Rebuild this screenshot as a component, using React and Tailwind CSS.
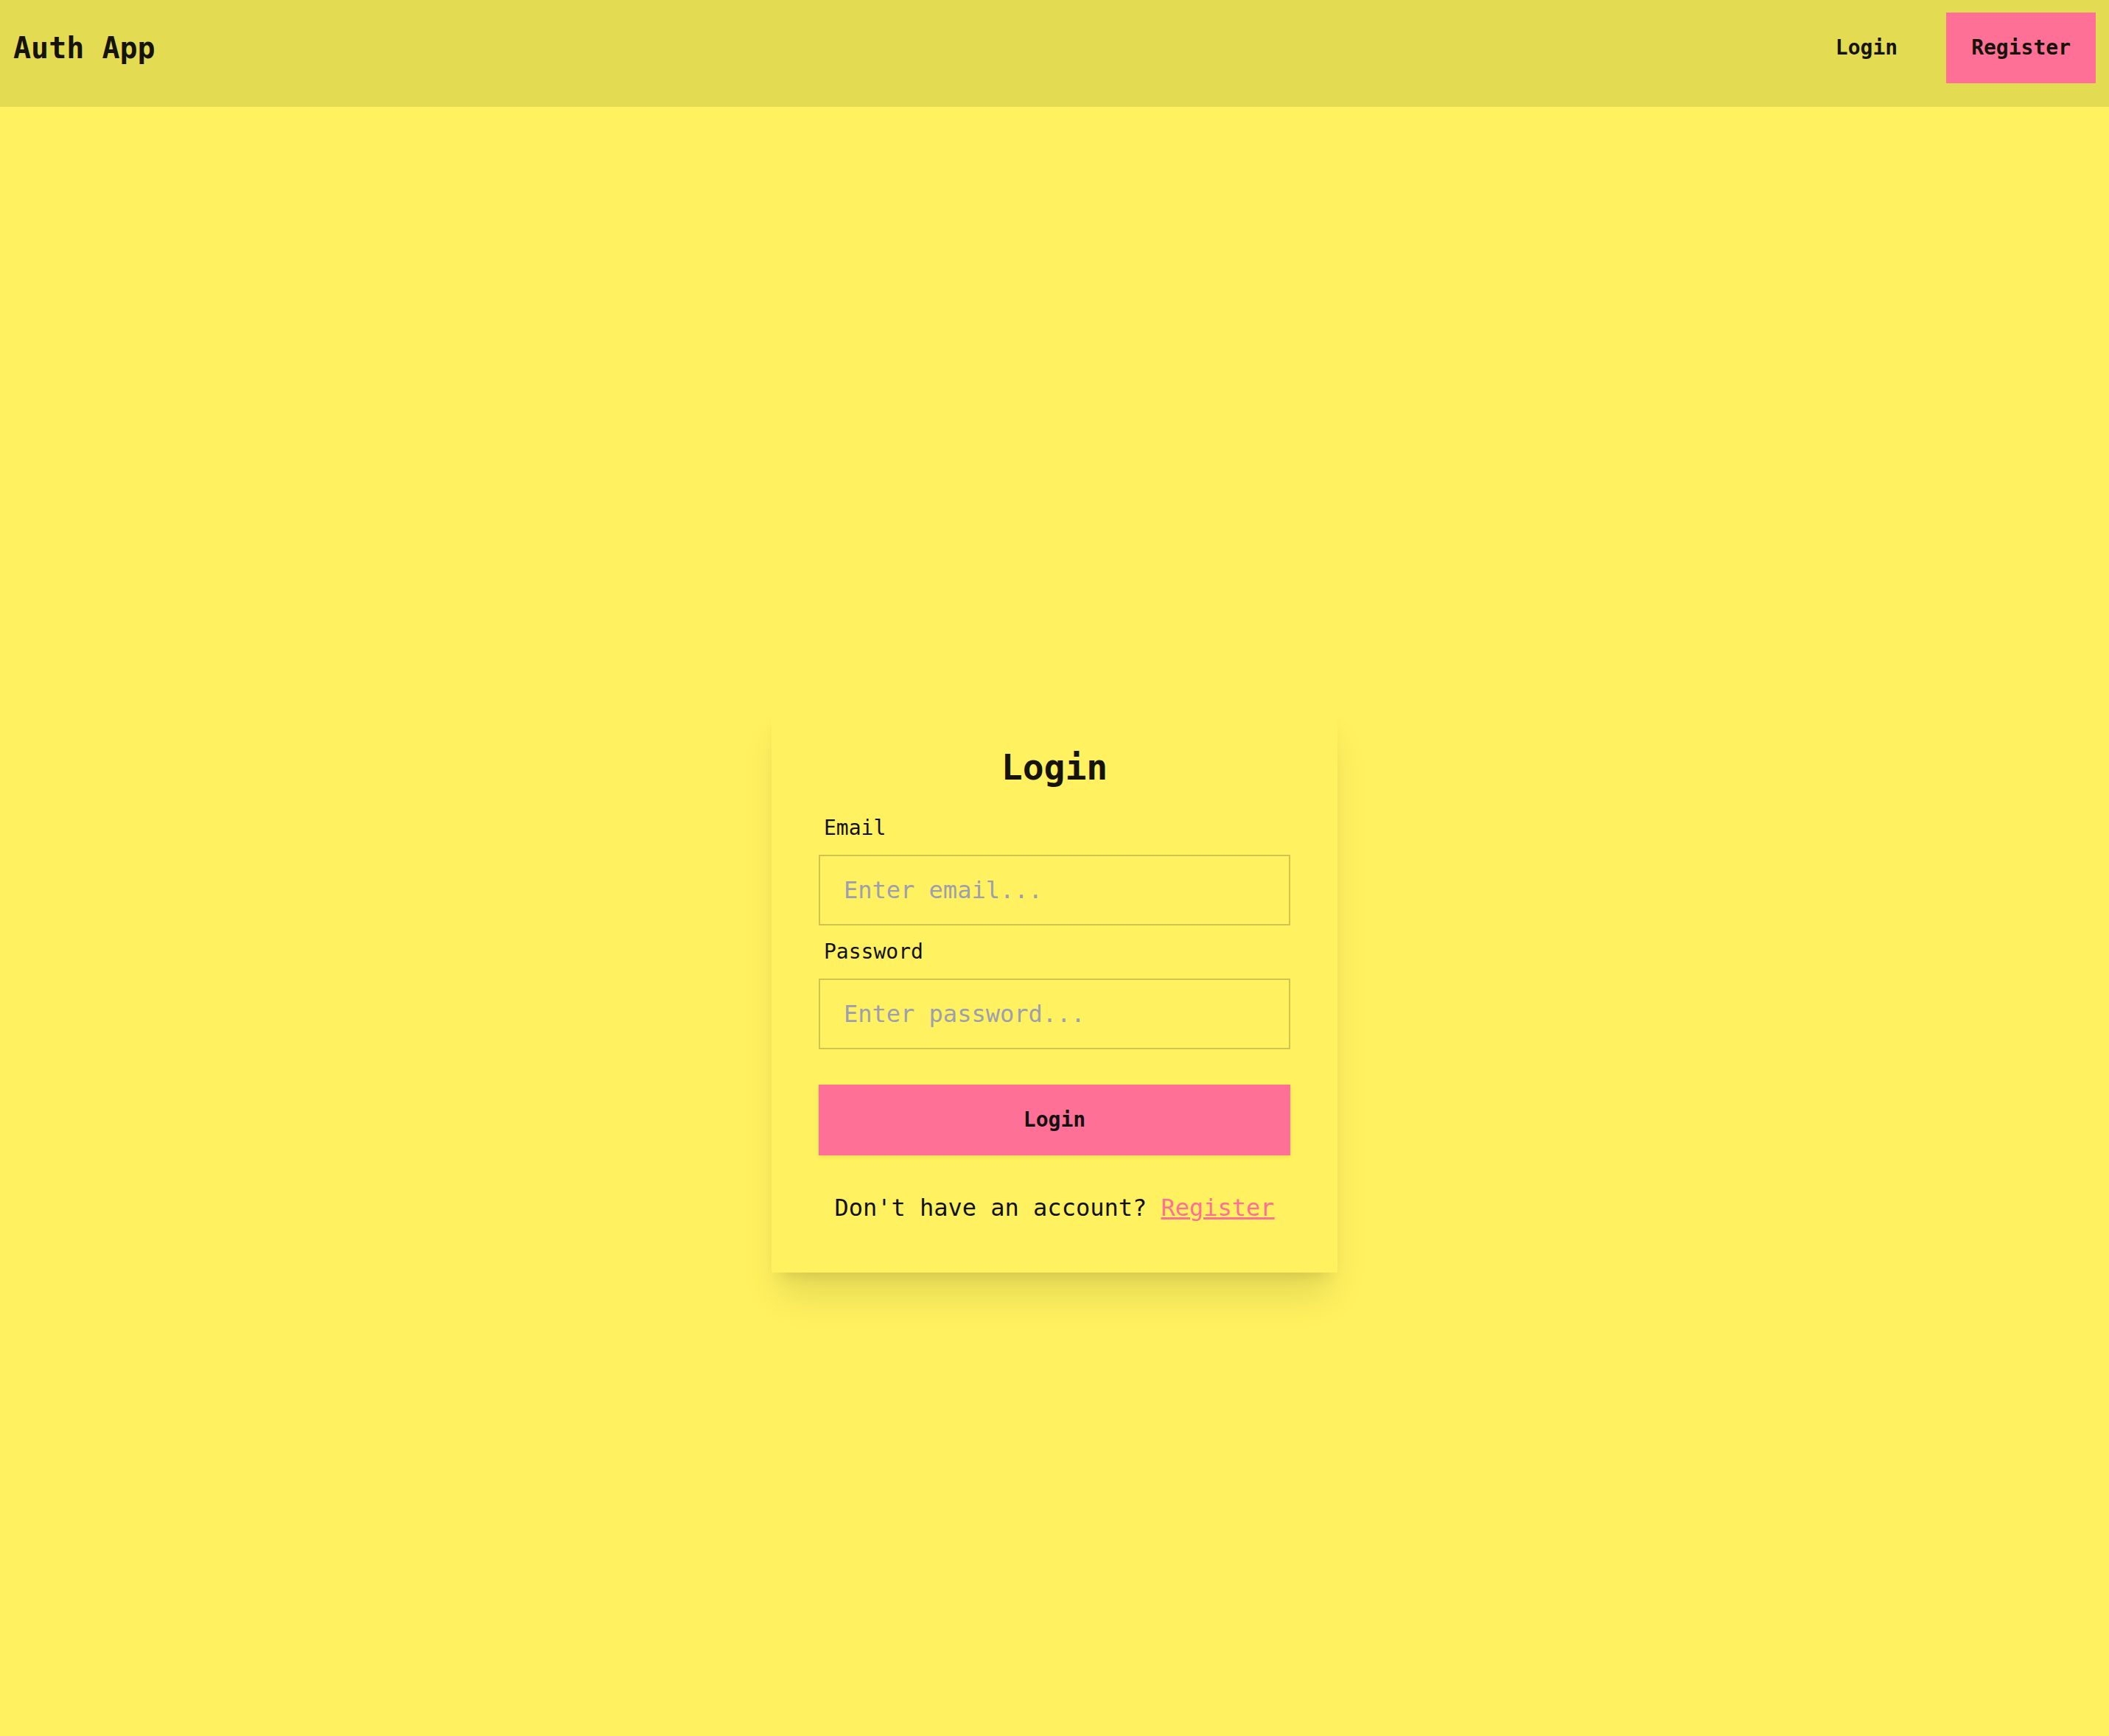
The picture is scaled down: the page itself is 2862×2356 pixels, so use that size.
import React from "react";

export default function App() {
  return (
    <div className="min-h-screen bg-[#fff15f] text-[#16140a] font-['DejaVu_Sans_Mono',monospace]">
      <header className="flex items-center justify-between bg-[#e3db52] pl-[18px] pr-[18px] pt-[17px] pb-[32px]">
        <div className="text-[40px] leading-[56px] font-bold">Auth App</div>
        <nav className="flex items-center gap-[32px]">
          <a href="#" className="h-[96px] flex items-center px-[34px] text-[28px] font-bold">
            Login
          </a>
          <a href="#" className="h-[96px] flex items-center px-[34px] text-[28px] font-bold bg-[#ff7096]">
            Register
          </a>
        </nav>
      </header>

      <main className="min-h-screen flex items-center justify-center pt-[34px]">
        <div className="w-[768px] p-[64px] bg-[#fff15f] shadow-[0_40px_50px_-10px_rgba(0,0,0,0.1),0_16px_20px_-12px_rgba(0,0,0,0.1)]">
          <h2 className="text-center text-[48px] leading-[48px] font-bold mb-[39px]">Login</h2>
          <form className="flex flex-col">
            <label className="pl-[7px] text-[28px] leading-[40px] text-[#111] mb-[16px]">Email</label>
            <input
              type="email"
              placeholder="Enter email..."
              className="h-[96px] border-2 border-[#d0c54f] bg-transparent px-[32px] text-[32px] placeholder:text-[#9c9fb0] outline-none font-['DejaVu_Sans_Mono',monospace]"
            />
            <label className="pl-[7px] text-[28px] leading-[40px] text-[#111] mt-[16px] mb-[16px]">Password</label>
            <input
              type="password"
              placeholder="Enter password..."
              className="h-[96px] border-2 border-[#d0c54f] bg-transparent px-[32px] text-[32px] placeholder:text-[#9c9fb0] outline-none font-['DejaVu_Sans_Mono',monospace]"
            />
            <button
              type="button"
              className="mt-[48px] h-[96px] bg-[#ff7096] text-[28px] font-bold text-[#111] shadow-[0_2px_6px_rgba(0,0,0,0.08)] font-['DejaVu_Sans_Mono',monospace]"
            >
              Login
            </button>
          </form>
          <p className="mt-[47px] text-center text-[32px] leading-[48px] text-[#111]">
            Don't have an account?{" "}
            <a href="#" className="text-[#ff7096] underline">
              Register
            </a>
          </p>
        </div>
      </main>
    </div>
  );
}
